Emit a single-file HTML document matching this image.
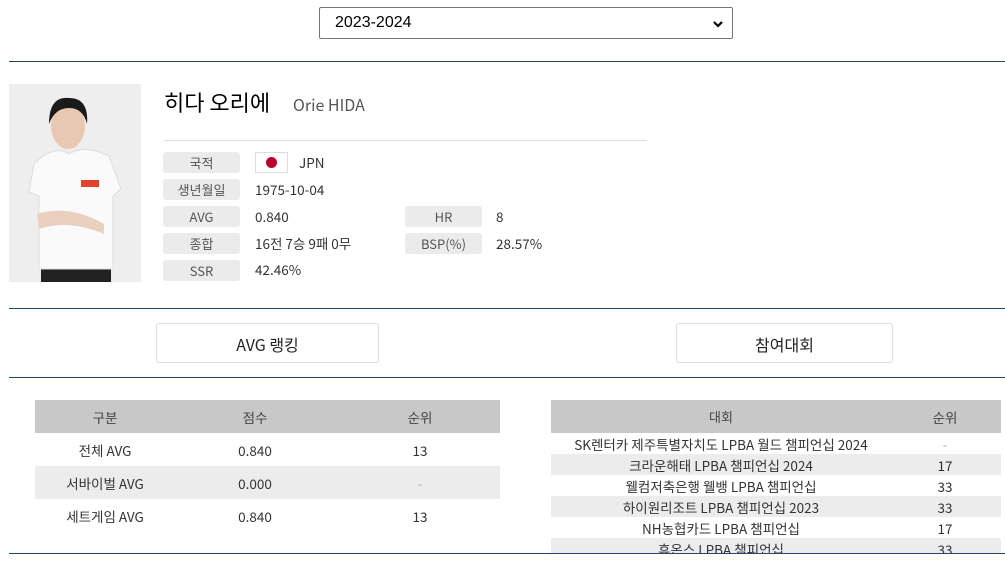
<!DOCTYPE html>
<html><head><meta charset="utf-8"><style>
*{box-sizing:border-box;margin:0;padding:0}
body{width:1005px;height:561px;overflow:hidden;background:#fff;font-family:"Noto Sans CJK KR",sans-serif;color:#333;position:relative;font-size:14px}
.a{position:absolute}
.line{position:absolute;left:9px;right:0;height:1px;background:#1d4a72}
.sel{left:319px;top:7px;width:414px;height:32px;border:1px solid #767676;border-radius:2px;font-size:16px;color:#000;padding:0 15px;line-height:30px;font-family:"Liberation Sans",sans-serif}
.lab{position:absolute;width:77px;height:21px;background:#ebebeb;border-radius:3px;font-size:13px;color:#555;text-align:center;line-height:21px}
.val{position:absolute;font-size:13.5px;color:#333;line-height:21px}
.btn{position:absolute;top:323px;height:40px;border:1px solid #ddd;border-radius:3px;font-size:16px;color:#222;text-align:center;line-height:40px}
.c{position:absolute;text-align:center;font-size:13.5px;color:#333;line-height:20px}
</style></head><body>
<div class="a sel">2023-2024
<svg class="a" style="right:8px;top:12px" width="12" height="8" viewBox="0 0 12 8"><path d="M2 2l4 4 4-4" stroke="#000" stroke-width="2.2" fill="none"/></svg></div>
<div class="line" style="top:61px;background:#2a4560"></div>
<div class="a" style="left:9px;top:84px;width:132px;height:198px;background:#eeeeef;overflow:hidden">
<svg width="132" height="198" viewBox="0 0 132 198">
<rect x="32" y="180" width="70" height="18" fill="#222"/>
<path d="M25 80 Q45 60 60 70 Q75 60 100 72 L112 105 L104 112 L104 185 L30 185 L30 112 L20 108Z" fill="#fafafa" stroke="#ddd"/>
<path d="M28 130 Q60 120 95 140 L95 150 Q60 135 30 145Z" fill="#e9d0bf"/>
<ellipse cx="59" cy="42" rx="17" ry="23" fill="#e8c8b0"/>
<path d="M40 40 Q40 12 60 14 Q80 14 78 40 Q74 24 60 24 Q46 24 40 40Z" fill="#1a1a1a"/>
<rect x="72" y="96" width="18" height="7" fill="#e0442c"/>
</svg></div>
<div class="a" style="left:164px;top:86px;font-size:22px;color:#000;line-height:32px">히다 오리에</div>
<div class="a" style="left:293px;top:92px;font-size:16px;color:#555;line-height:24px">Orie HIDA</div>
<div class="a" style="left:164px;top:140px;width:483px;height:1px;background:#ddd"></div>
<div class="lab" style="left:163px;top:152px">국적</div>
<div class="a" style="left:255px;top:152px;width:33px;height:21px;border:1px solid #ddd;background:#fff"><div class="a" style="left:10px;top:4px;width:11px;height:11px;border-radius:50%;background:#bc002d"></div></div>
<div class="val" style="left:299px;top:152px">JPN</div>
<div class="lab" style="left:163px;top:179px">생년월일</div><div class="val" style="left:255px;top:179px">1975-10-04</div>
<div class="lab" style="left:163px;top:206px">AVG</div><div class="val" style="left:255px;top:206px">0.840</div>
<div class="lab" style="left:405px;top:206px">HR</div><div class="val" style="left:496px;top:206px">8</div>
<div class="lab" style="left:163px;top:233px">종합</div><div class="val" style="left:255px;top:233px">16전 7승 9패 0무</div>
<div class="lab" style="left:405px;top:233px">BSP(%)</div><div class="val" style="left:496px;top:233px">28.57%</div>
<div class="lab" style="left:163px;top:260px">SSR</div><div class="val" style="left:255px;top:259px">42.46%</div>
<div class="line" style="top:308px"></div>
<div class="btn" style="left:156px;width:223px">AVG 랭킹</div>
<div class="btn" style="left:676px;width:217px">참여대회</div>
<div class="line" style="top:377px"></div>
<div class="a" style="left:35px;top:400px;width:465px;height:33px;background:#c8c8c8"></div>
<div class="a" style="left:35px;top:466px;width:465px;height:33px;background:#ececec"></div>
<div class="c" style="left:35px;width:140px;top:407px;color:#444">구분</div>
<div class="c" style="left:185px;width:140px;top:407px;color:#444">점수</div>
<div class="c" style="left:350px;width:140px;top:407px;color:#444">순위</div>
<div class="c" style="left:35px;width:140px;top:440px">전체 AVG</div><div class="c" style="left:185px;width:140px;top:440px">0.840</div><div class="c" style="left:350px;width:140px;top:440px">13</div>
<div class="c" style="left:35px;width:140px;top:473px">서바이벌 AVG</div><div class="c" style="left:185px;width:140px;top:473px">0.000</div><div class="c" style="left:350px;width:140px;top:473px;color:#aaa">-</div>
<div class="c" style="left:35px;width:140px;top:506px">세트게임 AVG</div><div class="c" style="left:185px;width:140px;top:506px">0.840</div><div class="c" style="left:350px;width:140px;top:506px">13</div>
<div class="a" style="left:551px;top:400px;width:450px;height:33px;background:#c8c8c8"></div>
<div class="a" style="left:551px;top:454px;width:450px;height:21px;background:#ececec"></div>
<div class="a" style="left:551px;top:496px;width:450px;height:21px;background:#ececec"></div>
<div class="a" style="left:551px;top:538px;width:450px;height:15px;background:#ececec"></div>
<div class="c" style="left:551px;width:340px;top:407px;color:#444;font-size:13px">대회</div>
<div class="c" style="left:905px;width:80px;top:407px;color:#444">순위</div>
<div class="a" style="left:551px;top:433px;width:450px;height:120px;overflow:hidden">
<div class="c" style="left:0;width:340px;top:1px">SK렌터카 제주특별자치도 LPBA 월드 챔피언십 2024</div><div class="c" style="left:354px;width:80px;top:1px;color:#aaa">-</div>
<div class="c" style="left:0;width:340px;top:22px">크라운해태 LPBA 챔피언십 2024</div><div class="c" style="left:354px;width:80px;top:22px">17</div>
<div class="c" style="left:0;width:340px;top:43px">웰컴저축은행 웰뱅 LPBA 챔피언십</div><div class="c" style="left:354px;width:80px;top:43px">33</div>
<div class="c" style="left:0;width:340px;top:64px">하이원리조트 LPBA 챔피언십 2023</div><div class="c" style="left:354px;width:80px;top:64px">33</div>
<div class="c" style="left:0;width:340px;top:85px">NH농협카드 LPBA 챔피언십</div><div class="c" style="left:354px;width:80px;top:85px">17</div>
<div class="c" style="left:0;width:340px;top:106px">휴온스 LPBA 챔피언십</div><div class="c" style="left:354px;width:80px;top:106px">33</div>
</div>
<div class="line" style="top:553px"></div>
</body></html>
